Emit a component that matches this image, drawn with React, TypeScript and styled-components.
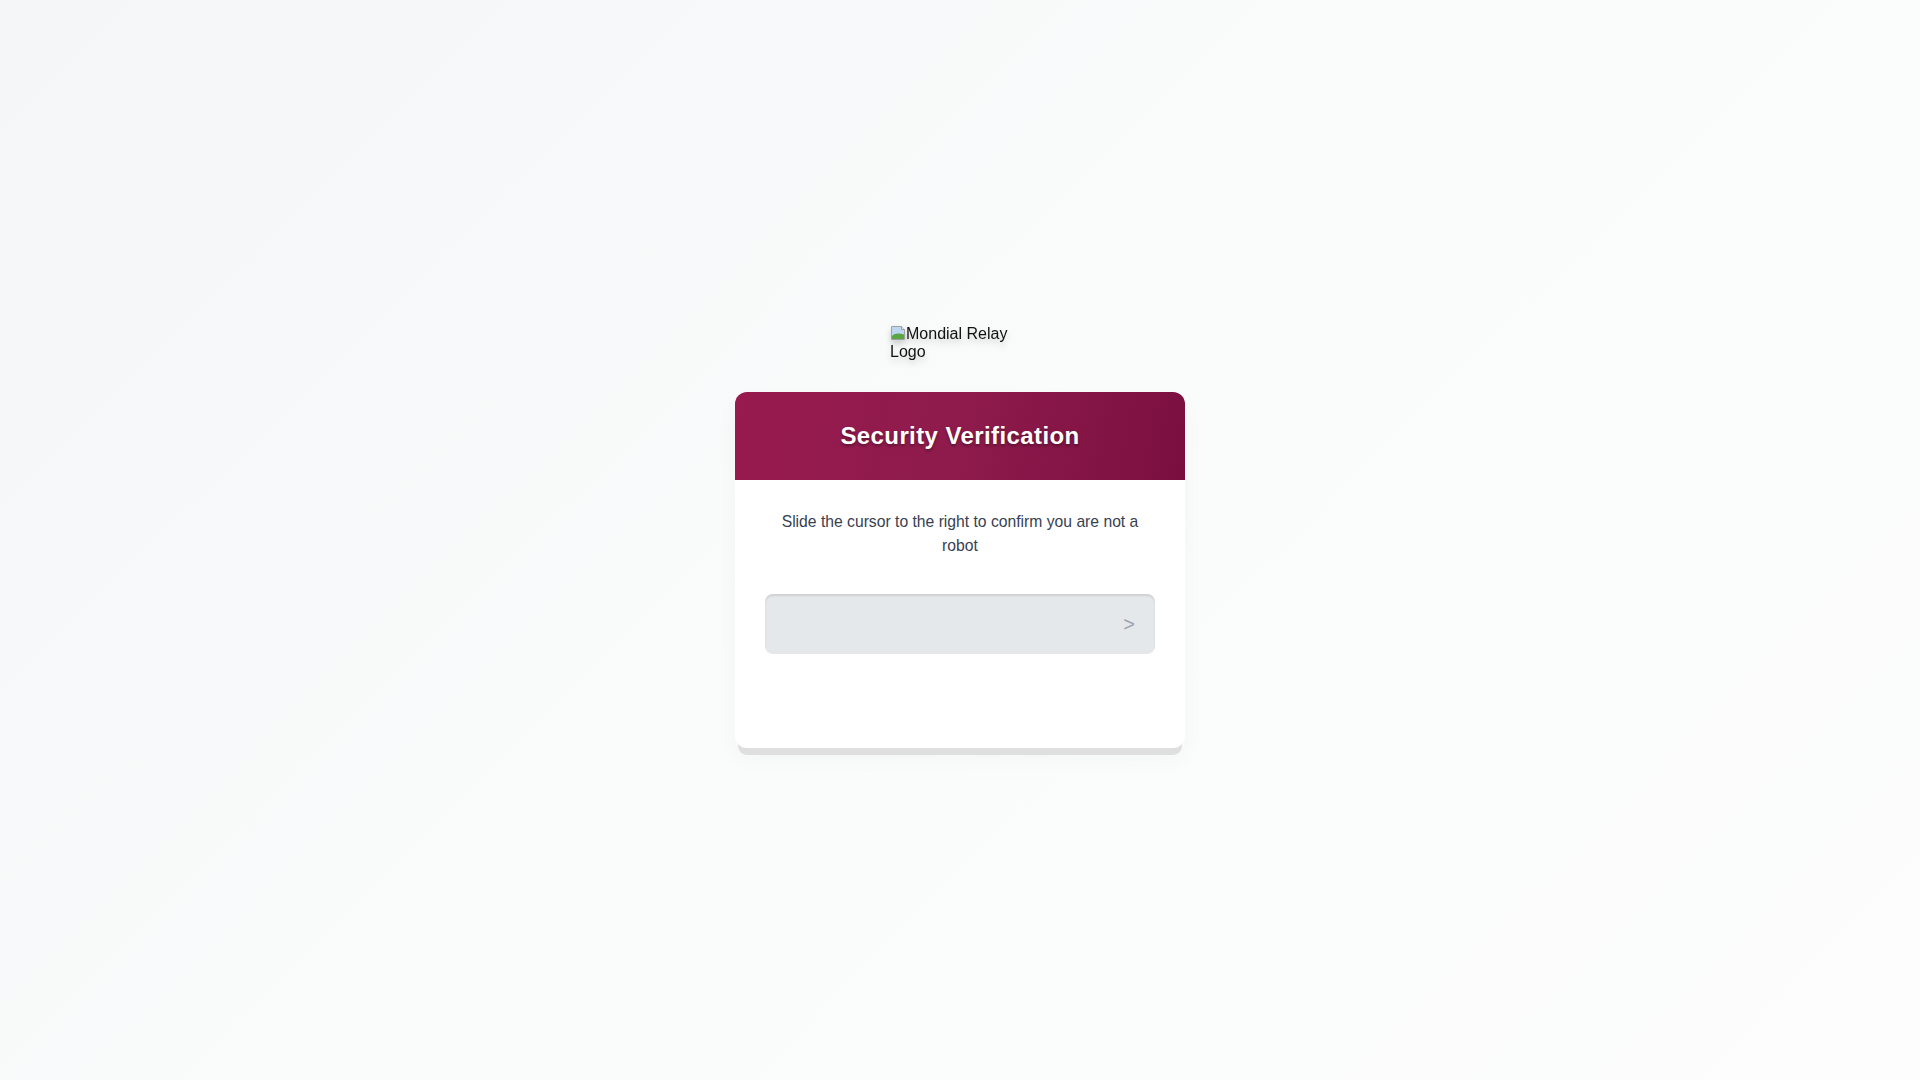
import React from "react";
import styled, { createGlobalStyle } from "styled-components";

const GlobalStyle = createGlobalStyle`
  * {
    box-sizing: border-box;
  }
  body {
    margin: 0;
    font-family: "Liberation Sans", Arial, sans-serif;
    background: linear-gradient(135deg, #f5f6f7 0%, #fafbfb 50%, #fdfdfd 100%);
    min-height: 100vh;
  }
`;

const Page = styled.div`
  min-height: 100vh;
  display: flex;
  flex-direction: column;
  align-items: center;
  justify-content: center;
  padding-bottom: 7px;
`;

const Logo = styled.div`
  width: 140px;
  font-size: 16px;
  line-height: 18px;
  color: #111;
  margin-bottom: 31px;
  filter: drop-shadow(0 4px 3px rgba(0, 0, 0, 0.18));
`;

const BrokenIcon = styled.svg`
  width: 16px;
  height: 16px;
  vertical-align: -2px;
`;

const Card = styled.div`
  width: 450px;
  background: #fff;
  border-radius: 12px;
  box-shadow: 0 10px 0 -3px #dfdfdf, 0 10px 24px rgba(0, 0, 0, 0.03);
`;

const Header = styled.div`
  height: 88px;
  border-radius: 12px 12px 0 0;
  background: linear-gradient(100deg, #981a4e 0%, #8e1b4c 50%, #7a0f3f 100%);
  display: flex;
  align-items: center;
  justify-content: center;
`;

const Title = styled.h1`
  margin: 0;
  color: #fff;
  font-size: 24px;
  font-weight: 700;
  letter-spacing: 0.4px;
  text-shadow: 0 2px 3px rgba(0, 0, 0, 0.35);
`;

const Body = styled.div`
  padding: 30px 30px 30px;
`;

const Instruction = styled.p`
  margin: 0 0 36px;
  text-align: center;
  font-size: 15.7px;
  line-height: 24px;
  color: #374151;
`;

const Track = styled.div`
  height: 60px;
  border-radius: 8px;
  background: #e5e8eb;
  box-shadow: inset 0 2px 2px rgba(0, 0, 0, 0.1);
  display: flex;
  align-items: center;
  justify-content: flex-end;
  padding-right: 20px;
`;

const Arrow = styled.span`
  font-size: 20px;
  color: #9ca3af;
  line-height: 1;
`;

const Status = styled.div`
  height: 34px;
  margin-top: 30px;
`;

export default function App() {
  return (
    <>
      <GlobalStyle />
      <Page>
        <Logo>
          <BrokenIcon viewBox="0 0 16 16">
            <path d="M1.5 1.5h10l3 3v10h-13z" fill="#fff" stroke="#a0a0a0" />
            <path d="M2 2h9.3l2.7 2.7V11H2z" fill="#bcd7ef" />
            <path d="M2 14V11c3-3 6-3 12-1.5V14z" fill="#5aa544" />
            <path d="M11.5 1.5v3h3" fill="#e8e8e8" stroke="#a0a0a0" />
          </BrokenIcon>
          Mondial Relay Logo
        </Logo>
        <Card>
          <Header>
            <Title>Security Verification</Title>
          </Header>
          <Body>
            <Instruction>
              Slide the cursor to the right to confirm you are not a robot
            </Instruction>
            <Track>
              <Arrow>&gt;</Arrow>
            </Track>
            <Status />
          </Body>
        </Card>
      </Page>
    </>
  );
}
